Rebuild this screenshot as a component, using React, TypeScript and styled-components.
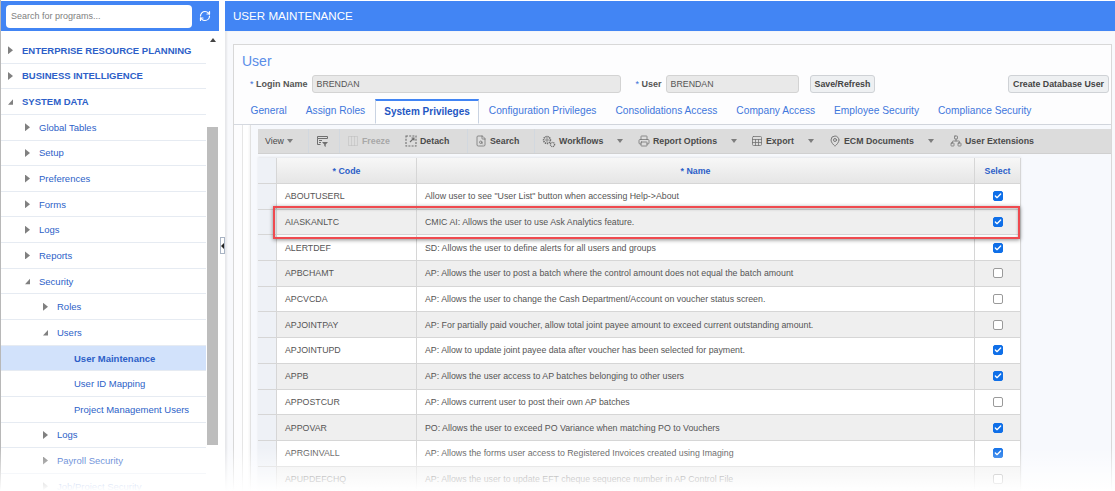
import React from 'react';
import styled, { createGlobalStyle } from 'styled-components';
import { Check, FileSearch, Network, Printer, RefreshCw, Sheet, MapPin } from 'lucide-react';

const GlobalStyle = createGlobalStyle`
  html, body { margin: 0; padding: 0; background: #fff; }
  body { font-family: "Liberation Sans", Arial, sans-serif; }
`;

// tree rows of the left nav
const tree = [
  { label: 'ENTERPRISE RESOURCE PLANNING', level: 0, arrow: 'right' },
  { label: 'BUSINESS INTELLIGENCE', level: 0, arrow: 'right' },
  { label: 'SYSTEM DATA', level: 0, arrow: 'open' },
  { label: 'Global Tables', level: 1, arrow: 'right' },
  { label: 'Setup', level: 1, arrow: 'right' },
  { label: 'Preferences', level: 1, arrow: 'right' },
  { label: 'Forms', level: 1, arrow: 'right' },
  { label: 'Logs', level: 1, arrow: 'right' },
  { label: 'Reports', level: 1, arrow: 'right' },
  { label: 'Security', level: 1, arrow: 'open' },
  { label: 'Roles', level: 2, arrow: 'right' },
  { label: 'Users', level: 2, arrow: 'open' },
  { label: 'User Maintenance', level: 3, active: true },
  { label: 'User ID Mapping', level: 3 },
  { label: 'Project Management Users', level: 3 },
  { label: 'Logs', level: 2, arrow: 'right' },
  { label: 'Payroll Security', level: 2, arrow: 'right' },
  { label: 'Job/Project Security', level: 2, arrow: 'right' }
];

const tabs = [
  'General',
  'Assign Roles',
  'System Privileges',
  'Configuration Privileges',
  'Consolidations Access',
  'Company Access',
  'Employee Security',
  'Compliance Security'
];

const rows = [
  ['ABOUTUSERL', 'Allow user to see "User List" button when accessing Help->About', true],
  ['AIASKANLTC', 'CMIC AI: Allows the user to use Ask Analytics feature.', true],
  ['ALERTDEF', 'SD: Allows the user to define alerts for all users and groups', true],
  ['APBCHAMT', 'AP: Allows the user to post a batch where the control amount does not equal the batch amount', false],
  ['APCVCDA', 'AP: Allows the user to change the Cash Department/Account on voucher status screen.', false],
  ['APJOINTPAY', 'AP: For partially paid voucher, allow total joint payee amount to exceed current outstanding amount.', false],
  ['APJOINTUPD', 'AP: Allow to update joint payee data after voucher has been selected for payment.', true],
  ['APPB', 'AP: Allows the user access to AP batches belonging to other users', true],
  ['APPOSTCUR', 'AP: Allows current user to post their own AP batches', false],
  ['APPOVAR', 'PO: Allows the user to exceed PO Variance when matching PO to Vouchers', true],
  ['APRGINVALL', 'AP: Allows the forms user access to Registered Invoices created using Imaging', true],
  ['APUPDEFCHQ', 'AP: Allows the user to update EFT cheque sequence number in AP Control File', false]
] as const;

const Page = styled.div`
  position: relative;
  width: 1115px;
  height: 491px;
  overflow: hidden;
  display: flex;
  background: #fff;
`;

const Sidebar = styled.aside`
  width: 219px;
  flex: none;
  display: flex;
  flex-direction: column;
  border-left: 1px solid #b8b8b8;
  box-sizing: border-box;
`;

const SearchBar = styled.div`
  height: 30px;
  margin-top: 1px;
  background: #4285f4;
  display: flex;
  align-items: center;
  padding: 0 0 0 5px;
  gap: 7px;
  color: #fff;
`;

const SearchInput = styled.div`
  width: 186px;
  height: 23px;
  background: #fff;
  border-radius: 4px;
  font-size: 9px;
  line-height: 23px;
  padding-left: 5px;
  box-sizing: border-box;
  color: #808080;
`;

const TreeArea = styled.div`
  flex: 1;
  display: flex;
  min-height: 0;
  padding-top: 7px;
`;

const TreeList = styled.div`
  width: 205px;
  flex: none;
`;

const TreeRow = styled.div<{ $level: number; $active?: boolean }>`
  height: 25.65px;
  box-sizing: border-box;
  display: flex;
  align-items: center;
  padding-left: ${(p) => [7, 24, 42, 73][p.$level]}px;
  gap: 9px;
  border-bottom: 1px solid #e6ebf2;
  background: ${(p) => (p.$active ? '#d2e2fb' : '#fff')};
  color: #2d5fc8;
  font-size: 9.5px;
  white-space: nowrap;
  font-weight: ${(p) => (p.$level === 0 || p.$active ? 700 : 400)};
`;

const Arrow = styled.span<{ $open: boolean }>`
  width: 5px;
  height: 8px;
  flex: none;
  background: #808080;
  clip-path: ${(p) => (p.$open ? 'polygon(100% 20%, 100% 90%, 0 90%)' : 'polygon(0 0, 100% 50%, 0 100%)')};
`;

const ScrollBar = styled.div`
  width: 11px;
  margin-left: 1px;
  flex: none;
  display: flex;
  flex-direction: column;
  align-items: center;
`;

const ScrollUp = styled.span`
  width: 0;
  height: 0;
  border-left: 3px solid transparent;
  border-right: 3px solid transparent;
  border-bottom: 4px solid #444;
`;

const ScrollThumb = styled.div`
  width: 100%;
  height: 318px;
  margin-top: 85px;
  background: #bdbdbd;
`;

const Handle = styled.div`
  width: 6px;
  flex: none;
  display: flex;
  align-items: center;
  justify-content: center;
  background: #fff;
`;

const HandleGrip = styled.div`
  width: 5px;
  height: 17px;
  box-sizing: border-box;
  border: 1px solid #a9b4c4;
  position: relative;
  &::after {
    content: '';
    position: absolute;
    left: 0;
    top: 5px;
    border-top: 3px solid transparent;
    border-bottom: 3px solid transparent;
    border-right: 3px solid #222;
  }
`;

const Main = styled.main`
  flex: 1;
  min-width: 0;
  display: flex;
  flex-direction: column;
`;

const MainHeader = styled.header`
  height: 30px;
  margin-top: 1px;
  flex: none;
  background: #4285f4;
  color: #fff;
  font-size: 11.6px;
  line-height: 29px;
  padding-left: 8px;
`;

const Content = styled.div`
  flex: 1;
  padding: 13px 3px 0 8px;
  background: #f8f9fc;
  box-shadow: inset 2px 0 2px rgba(0, 0, 0, 0.07);
  min-height: 0;
`;

const Card = styled.section`
  height: 100%;
  box-sizing: border-box;
  border: 1px solid #d8d8d8;
  border-bottom: 0;
  background: #fdfdfe;
  padding: 8px 0 0 0;
  display: flex;
  flex-direction: column;
`;

const Title = styled.h1`
  margin: 0 0 0 8px;
  font-size: 14px;
  line-height: 17px;
  font-weight: 400;
  color: #5a8de8;
`;

const FormRow = styled.div`
  display: flex;
  align-items: center;
  height: 18px;
  margin-top: 5px;
  padding-left: 16px;
`;

const FieldLabel = styled.label<{ $gap: number }>`
  font-size: 9px;
  color: #555;
  font-weight: 700;
  margin-left: ${(p) => p.$gap}px;
  margin-right: 4px;
  white-space: nowrap;
  span { color: #3a6fd8; font-weight: 400; }
`;

const ReadOnly = styled.div<{ $width: number }>`
  width: ${(p) => p.$width}px;
  height: 18px;
  box-sizing: border-box;
  background: #e9e9e9;
  border: 1px solid #d3d3d3;
  border-radius: 3px;
  font-size: 8.8px;
  line-height: 16px;
  padding-left: 4px;
  color: #555;
`;

const Btn = styled.button<{ $left?: string; $right?: number }>`
  height: 18px;
  box-sizing: border-box;
  padding: 0 4px;
  background: #eef0f2;
  border: 1px solid #cfd2d6;
  border-radius: 3px;
  font-family: inherit;
  font-size: 8.8px;
  font-weight: 700;
  color: #444;
  margin-left: ${(p) => p.$left || '0'};
  margin-right: ${(p) => p.$right || 0}px;
`;

const TabBar = styled.nav`
  display: flex;
  height: 25px;
  margin-top: 6px;
  padding-left: 7px;
  border-bottom: 1px solid #d5d9e0;
`;

const Tab = styled.div<{ $active?: boolean }>`
  padding: 0 9.5px;
  font-size: 10.2px;
  line-height: 24px;
  height: 25px;
  box-sizing: border-box;
  white-space: nowrap;
  color: #3f77dc;
  ${(p) =>
    p.$active &&
    `
    font-size: 10px;
    padding: 0 8.5px;
    font-weight: 700;
    color: #1f57c3;
    background: #fff;
    border: 1px solid #c9d3e2;
    border-top: 2px solid #4285f4;
    border-bottom: 1px solid #fff;
    line-height: 22px;
  `}
`;

const TabPanel = styled.div`
  flex: 1;
  min-height: 0;
  margin-left: 8px;
  background: #fff;
  border-left: 1px solid #e6e6e6;
  padding-left: 7px;
`;

const PanelInner = styled.div`
  height: 100%;
  box-sizing: border-box;
  background: #f7f9fd;
  border-left: 1px solid #e2e2e2;
  box-shadow: -1px 0 2px rgba(0, 0, 0, 0.05);
  padding: 4px 0 0 7px;
`;

const Toolbar = styled.div`
  height: 25px;
  background: #dcdcdc;
  display: flex;
  align-items: center;
  font-size: 8.8px;
  font-weight: 700;
  color: #4a4a4a;
  border-bottom: 1px solid #d0d0d0;
  box-sizing: border-box;
`;

const ToolItem = styled.span<{ $w: number; $off?: boolean; $plain?: boolean; $sep?: boolean }>`
  width: ${(p) => p.$w}px;
  height: 100%;
  flex: none;
  display: flex;
  align-items: center;
  gap: 3px;
  padding-left: 7px;
  box-sizing: border-box;
  white-space: nowrap;
  font-weight: ${(p) => (p.$plain ? 400 : 700)};
  color: ${(p) => (p.$off ? '#a8a8a8' : 'inherit')};
  border-left: ${(p) => (p.$sep ? '1px solid #d2d8df' : '0')};
  svg { color: ${(p) => (p.$off ? '#bdbdbd' : '#6f6f6f')}; flex: none; }
`;

const Caret = styled.span<{ $left?: number }>`
  width: 0;
  height: 0;
  border-left: 3.5px solid transparent;
  border-right: 3.5px solid transparent;
  border-top: 4px solid #7d7d7d;
  margin-left: ${(p) => p.$left || 0}px;
`;

const TableWrap = styled.div`
  position: relative;
  width: 763px;
  margin-top: 4px;
  box-shadow: 0 -1px 2px rgba(0, 0, 0, 0.08);
`;

const GridRow = styled.div<{ $alt?: boolean; $head?: boolean }>`
  display: grid;
  grid-template-columns: 19px 140px 558px 46px;
  height: ${(p) => (p.$head ? 26 : 25.7)}px;
  box-sizing: border-box;
  border-bottom: 1px solid #d6d6d6;
  font-size: 8.8px;
  color: #555;
  background: ${(p) => (p.$head ? 'linear-gradient(#f7f7f7, #e6e6e6)' : p.$alt ? '#efefef' : '#fff')};
`;

const Cell = styled.div<{ $head?: boolean; $center?: boolean }>`
  display: flex;
  align-items: center;
  padding-left: ${(p) => (p.$center ? 0 : 8)}px;
  justify-content: ${(p) => (p.$center ? 'center' : 'flex-start')};
  border-right: 1px solid #d6d6d6;
  white-space: nowrap;
  overflow: hidden;
  color: ${(p) => (p.$head ? '#2d5fc8' : 'inherit')};
  font-weight: ${(p) => (p.$head ? 700 : 400)};
`;

const Gutter = styled.div`
  background: #eef1f6;
  border-right: 1px solid #d6d6d6;
`;

const CheckBox = styled.span<{ $on: boolean }>`
  width: 10px;
  height: 10px;
  box-sizing: border-box;
  border-radius: 2px;
  display: flex;
  align-items: center;
  justify-content: center;
  background: ${(p) => (p.$on ? '#0f6fe8' : '#fff')};
  border: 1px solid ${(p) => (p.$on ? '#0f6fe8' : '#9a9a9a')};
  color: #fff;
`;

const Highlight = styled.div`
  position: absolute;
  left: 15px;
  top: 48px;
  width: 747px;
  height: 33px;
  box-sizing: border-box;
  border: 2px solid #ef4a4f;
  box-shadow: 0 1px 4px rgba(0, 0, 0, 0.45), inset 0 1px 3px rgba(0, 0, 0, 0.3);
  pointer-events: none;
`;

const BottomFade = styled.div`
  position: absolute;
  left: 0;
  right: 0;
  bottom: 0;
  height: 44px;
  background: linear-gradient(rgba(255, 255, 255, 0), #fff);
  pointer-events: none;
`;

const FilterIcon = () => (
  <svg width="13" height="13" viewBox="0 0 13 13" fill="none" stroke="currentColor" strokeWidth="1">
    <path d="M1.5 1.5h10v2h-10zM1.5 3.5v6h3M3 5.5h3M3 7.5h2" />
    <path d="M6 7h6l-2.3 2.4V12L8.3 11V9.4z" fill="currentColor" stroke="none" />
  </svg>
);

const FreezeIcon = () => (
  <svg width="12" height="12" viewBox="0 0 12 12" fill="none" stroke="currentColor" strokeWidth="1">
    <path d="M1.5 1.5h9v9h-9zM4.5 1.5v9M7.5 1.5v9" strokeDasharray="1 1" />
  </svg>
);

const DetachIcon = () => (
  <svg width="12" height="12" viewBox="0 0 12 12" fill="none" stroke="currentColor" strokeWidth="1.1">
    <path d="M1 1h10v10H1z" strokeDasharray="2 1.2" />
    <path d="M5 7l4-4M6.5 3H9v2.5" />
  </svg>
);

const WorkflowIcon = () => (
  <svg width="14" height="13" viewBox="0 0 14 13" fill="none" stroke="currentColor">
    <circle cx="5" cy="5" r="3.4" strokeWidth="1.6" strokeDasharray="1.3 0.7" />
    <circle cx="5" cy="5" r="1.2" strokeWidth="0.8" />
    <circle cx="10.5" cy="9.5" r="2.1" strokeWidth="1.3" strokeDasharray="1 0.6" />
  </svg>
);

const App = () => (
  <Page>
    <GlobalStyle />
    <Sidebar>
      <SearchBar>
        <SearchInput>Search for programs...</SearchInput>
        <RefreshCw size={12} strokeWidth={2.4} />
      </SearchBar>
      <TreeArea>
        <TreeList>
          <div style={{ height: 0 }} />
          {tree.map((item, i) => (
            <TreeRow key={i} $level={item.level} $active={item.active}>
              {item.arrow && <Arrow $open={item.arrow === 'open'} />}
              {item.label}
            </TreeRow>
          ))}
        </TreeList>
        <ScrollBar>
          <ScrollUp />
          <ScrollThumb />
        </ScrollBar>
      </TreeArea>
    </Sidebar>
    <Handle>
      <HandleGrip />
    </Handle>
    <Main>
      <MainHeader>USER MAINTENANCE</MainHeader>
      <Content>
        <Card>
          <Title>User</Title>
          <FormRow>
            <FieldLabel $gap={0}>
              <span>* </span>Login Name
            </FieldLabel>
            <ReadOnly $width={309}>BRENDAN</ReadOnly>
            <FieldLabel $gap={15}>
              <span>* </span>User
            </FieldLabel>
            <ReadOnly $width={133}>BRENDAN</ReadOnly>
            <Btn $left="11px">Save/Refresh</Btn>
            <Btn $left="auto" $right={2}>
              Create Database User
            </Btn>
          </FormRow>
          <TabBar>
            {tabs.map((t) => (
              <Tab key={t} $active={t === 'System Privileges'}>
                {t}
              </Tab>
            ))}
          </TabBar>
          <TabPanel>
            <PanelInner>
              <Toolbar>
                <ToolItem $w={50} $plain>
                  View <Caret />
                </ToolItem>
                <ToolItem $w={31} $sep>
                  <FilterIcon />
                </ToolItem>
                <ToolItem $w={59} $sep $off>
                  <FreezeIcon /> Freeze
                </ToolItem>
                <ToolItem $w={69}>
                  <DetachIcon /> Detach
                </ToolItem>
                <ToolItem $w={67} $sep>
                  <FileSearch size={12} strokeWidth={1.5} /> Search
                </ToolItem>
                <ToolItem $w={97} $sep>
                  <WorkflowIcon /> Workflows <Caret $left={11} />
                </ToolItem>
                <ToolItem $w={113}>
                  <Printer size={12} strokeWidth={1.5} /> Report Options <Caret $left={11} />
                </ToolItem>
                <ToolItem $w={78}>
                  <Sheet size={12} strokeWidth={1.5} /> Export <Caret $left={11} />
                </ToolItem>
                <ToolItem $w={121}>
                  <MapPin size={12} strokeWidth={1.8} /> ECM Documents <Caret $left={11} />
                </ToolItem>
                <ToolItem $w={110}>
                  <Network size={12} strokeWidth={1.5} /> User Extensions
                </ToolItem>
              </Toolbar>
              <TableWrap>
                <GridRow $head>
                  <Gutter />
                  <Cell $head $center>* Code</Cell>
                  <Cell $head $center>* Name</Cell>
                  <Cell $head $center>Select</Cell>
                </GridRow>
                {rows.map(([code, name, on], i) => (
                  <GridRow key={code} $alt={i % 2 === 1}>
                    <Gutter />
                    <Cell>{code}</Cell>
                    <Cell>{name}</Cell>
                    <Cell $center>
                      <CheckBox $on={on}>{on && <Check size={8} strokeWidth={4} />}</CheckBox>
                    </Cell>
                  </GridRow>
                ))}
                <Highlight />
              </TableWrap>
            </PanelInner>
          </TabPanel>
        </Card>
      </Content>
    </Main>
    <BottomFade />
  </Page>
);

export default App;
